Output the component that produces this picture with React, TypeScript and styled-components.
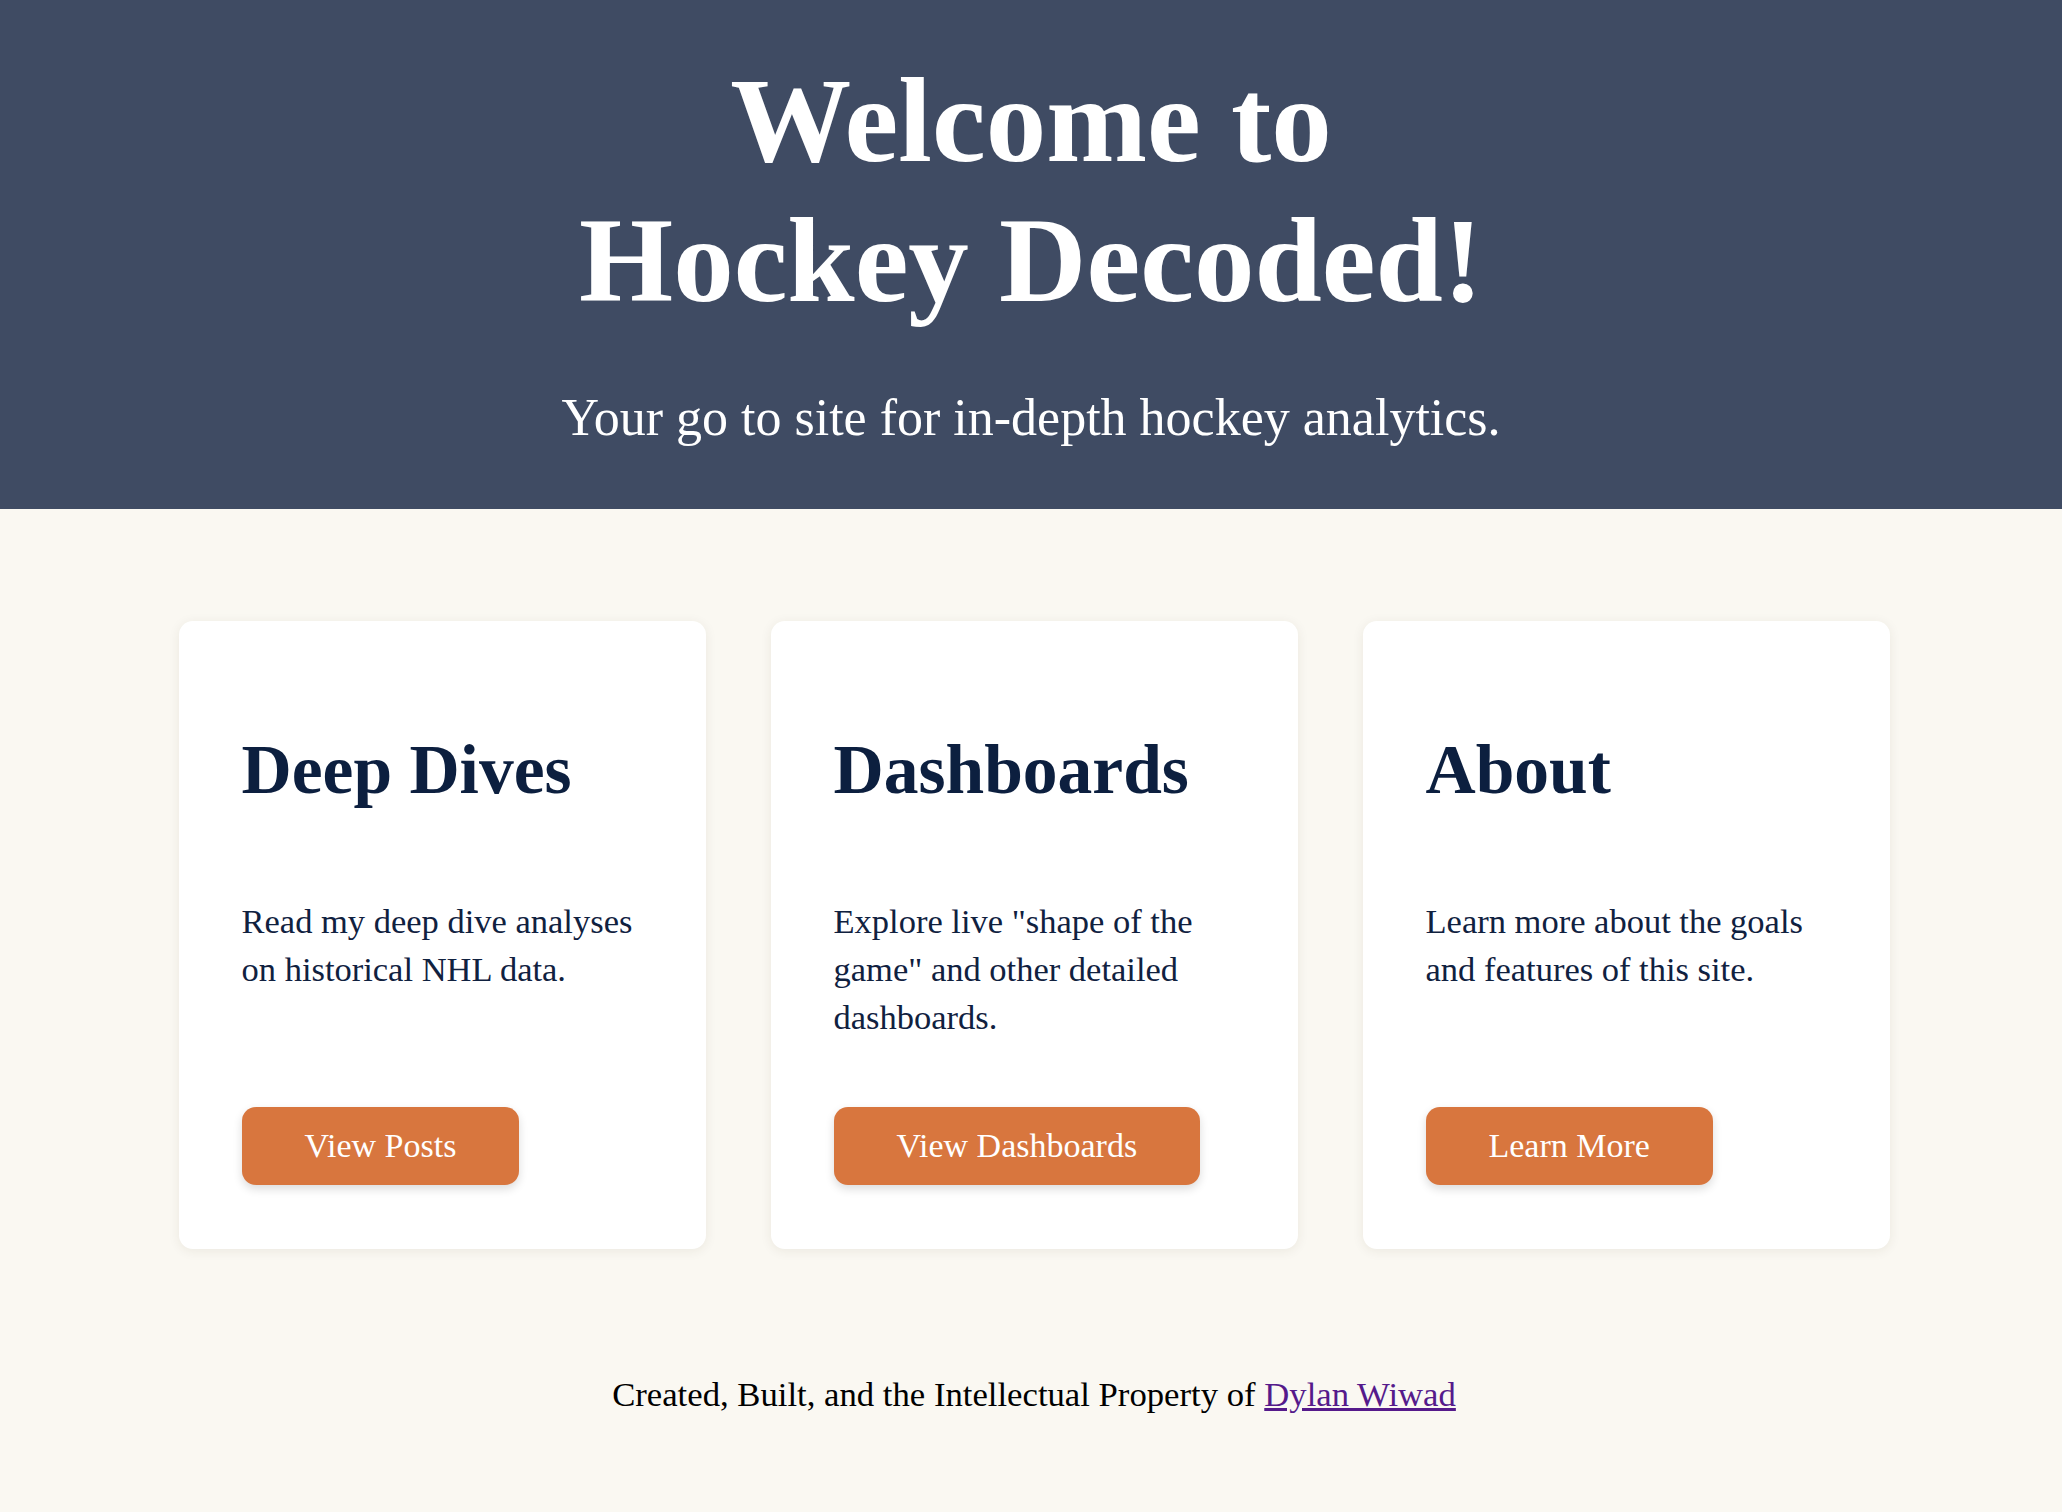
import styled, { createGlobalStyle } from "styled-components";

const GlobalStyle = createGlobalStyle`
  html, body {
    margin: 0;
    padding: 0;
    background-color: #faf8f2;
    font-family: "Liberation Serif", "Times New Roman", serif;
  }
  * {
    box-sizing: border-box;
  }
`;

const Page = styled.div`
  min-height: 100vh;
  display: flex;
  flex-direction: column;
`;

const Hero = styled.header`
  background-color: #3f4b63;
  color: #ffffff;
  text-align: center;
  padding: 50px 20px 61px;
`;

const Title = styled.h1`
  margin: 0;
  font-size: 121px;
  line-height: 140px;
  font-weight: 700;
`;

const Subtitle = styled.p`
  margin: 58px 0 0;
  font-size: 52px;
  line-height: 60px;
`;

const Cards = styled.section`
  display: grid;
  grid-template-columns: repeat(3, 527px);
  gap: 65px;
  justify-content: center;
  margin-top: 112px;
  padding-left: 6px;
`;

const Card = styled.div`
  display: flex;
  flex-direction: column;
  align-items: flex-start;
  background-color: #ffffff;
  border-radius: 14px;
  padding: 63px 63px 64px;
  box-shadow: 0 2px 12px rgba(60, 50, 30, 0.08);
`;

const CardTitle = styled.h2`
  margin: 45px 0 86px;
  font-size: 69.5px;
  line-height: 82px;
  font-weight: 700;
  color: #0c1f3f;
`;

const CardText = styled.p`
  margin: 0 0 66px;
  font-size: 34.5px;
  line-height: 48px;
  color: #10213f;
`;

const Button = styled.a`
  margin-top: auto;
  display: inline-flex;
  align-items: center;
  justify-content: center;
  height: 78px;
  padding: 0 63px;
  border-radius: 14px;
  background-color: #d8763e;
  color: #ffffff;
  font-size: 34px;
  text-decoration: none;
  box-shadow: 0 4px 10px rgba(0, 0, 0, 0.14);
  cursor: pointer;
`;

const Footer = styled.footer`
  text-align: center;
  margin-top: 120px;
  padding: 0 0 92px 6px;
  font-size: 34.7px;
  line-height: 51px;
  color: #000000;
  a {
    color: #551a8b;
  }
`;

const cards = [
  {
    title: "Deep Dives",
    text: "Read my deep dive analyses on historical NHL data.",
    action: "View Posts",
  },
  {
    title: "Dashboards",
    text: 'Explore live "shape of the game" and other detailed dashboards.',
    action: "View Dashboards",
  },
  {
    title: "About",
    text: "Learn more about the goals and features of this site.",
    action: "Learn More",
  },
];

function App() {
  return (
    <>
      <GlobalStyle />
      <Page>
        <Hero>
          <Title>
            Welcome to
            <br />
            Hockey Decoded!
          </Title>
          <Subtitle>Your go to site for in-depth hockey analytics.</Subtitle>
        </Hero>
        <Cards>
          {cards.map((c) => (
            <Card key={c.title}>
              <CardTitle>{c.title}</CardTitle>
              <CardText>{c.text}</CardText>
              <Button>{c.action}</Button>
            </Card>
          ))}
        </Cards>
        <Footer>
          Created, Built, and the Intellectual Property of{" "}
          <a href="#">Dylan Wiwad</a>
        </Footer>
      </Page>
    </>
  );
}

export default App;
